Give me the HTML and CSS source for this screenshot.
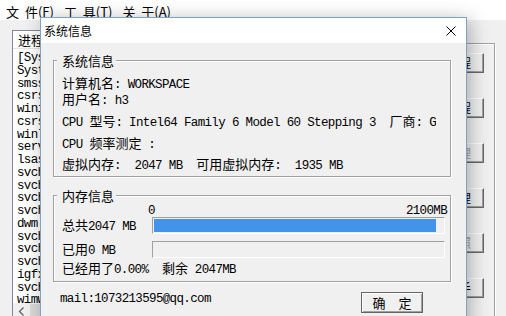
FILE: index.html
```html
<!DOCTYPE html>
<html lang="zh-CN">
<head>
<meta charset="utf-8">
<title>系统信息</title>
<link rel="stylesheet" href="styles.css">
</head>
<body>
<div class="app">
  <div class="menubar">
    <span class="menu">文 件(F)</span>
    <span class="menu">工 具(T)</span>
    <span class="menu">关 于(A)</span>
  </div>
  <div class="main">
    <div class="list">
      <div class="list-head">进程名称</div>
      <div class="list-body">
        <div>[System Process]</div>
        <div>System</div>
        <div>smss.exe</div>
        <div>csrss.exe</div>
        <div>wininit.exe</div>
        <div>csrss.exe</div>
        <div>winlogon.exe</div>
        <div>services.exe</div>
        <div>lsass.exe</div>
        <div>svchost.exe</div>
        <div>svchost.exe</div>
        <div>svchost.exe</div>
        <div>svchost.exe</div>
        <div>dwm.exe</div>
        <div>svchost.exe</div>
        <div>svchost.exe</div>
        <div>svchost.exe</div>
        <div>igfxCUIService.exe</div>
        <div>svchost.exe</div>
        <div>wimwsvc.exe</div>
      </div>
      <div class="hscroll">
        <span class="hs-arrow"><svg width="7" height="9" viewBox="0 0 7 9"><path d="M5.5 0.5 L1.5 4.5 L5.5 8.5" fill="none" stroke="#606060" stroke-width="1.3"/></svg></span>
        <span class="hs-thumb"></span>
      </div>
    </div>
    <div class="side">
      <div class="side-btn">刷新进程</div>
      <div class="side-btn">结束进程</div>
      <div class="side-btn off">模块管理</div>
      <div class="side-btn">服务管理</div>
      <div class="side-btn off">屏幕拍照</div>
      <div class="side-btn">系统助手</div>
    </div>
  </div>
</div>

<div class="dialog">
  <div class="titlebar">
    <span class="title">系统信息</span>
    <svg class="close" width="10" height="10" viewBox="0 0 10 10"><path d="M0.5 0.5 L9.5 9.5 M9.5 0.5 L0.5 9.5" stroke="#000" stroke-width="1"/></svg>
  </div>
  <div class="client">
    <div class="group">
      <span class="group-title">系统信息</span>
      <div class="info">
        <div class="line"><span class="z">计算机名</span>: WORKSPACE</div>
        <div class="line"><span class="z">用户名</span>: h3</div>
        <div class="line cpu gap6">CPU <span class="z">型号</span>: Intel64 Family 6 Model 60 Stepping 3  <span class="z">厂商</span>: GenuineIntel</div>
        <div class="line gap6">CPU <span class="z">频率测定</span> :</div>
        <div class="line gap5"><span class="z">虚拟内存</span>:  2047 MB  <span class="z">可用虚拟内存</span>:  1935 MB</div>
      </div>
    </div>
    <div class="group mem">
      <span class="group-title">内存信息</span>
      <div class="mem-body">
        <div class="scale"><span>0</span><span>2100MB</span></div>
        <div class="mrow">
          <span class="mlabel"><span class="z">总共</span>2047 MB</span>
          <div class="bar"><div class="fill" style="width: 97.48%"></div></div>
        </div>
        <div class="mrow">
          <span class="mlabel"><span class="z">已用</span>0 MB</span>
          <div class="bar"><div class="fill" style="width: 0%"></div></div>
        </div>
        <div class="summary"><span class="z">已经用了</span>0.00%  <span class="z">剩余</span> 2047MB</div>
      </div>
    </div>
    <div class="footer">
      <span class="mail">mail:1073213595@qq.com</span>
      <button class="ok" type="button">确　定</button>
    </div>
  </div>
</div>
</body>
</html>
```

FILE: styles.css
```css
* { box-sizing: border-box; }
html, body { margin: 0; padding: 0; }
body {
  width: 506px;
  height: 316px;
  overflow: hidden;
  position: relative;
  background: #f0f0f0;
  color: #000;
  font-family: "Noto Sans CJK SC", sans-serif;
}

/* background application window */
.app { display: flex; flex-direction: column; height: 316px; }
.menubar {
  height: 20px;
  flex: none;
  background: #fff;
  display: flex;
  align-items: flex-start;
  gap: 10px;
  padding: 2px 0 0 6px;
  font-size: 13px;
  line-height: 20px;
}
.menu { word-spacing: 3px; }

.main {
  flex: 1;
  min-height: 0;
  display: flex;
  align-items: flex-start;
  padding: 10px 0 0 12px;
}
.list {
  flex: none;
  width: 388px;
  height: 291px;
  border: 1px solid #828790;
  background: #fff;
  display: flex;
  flex-direction: column;
}
.list-head {
  flex: none;
  height: 18px;
  border-bottom: 1px solid #e5e5e5;
  padding-left: 5px;
  font-size: 13px;
  line-height: 17px;
}
.list-body {
  flex: 1;
  min-height: 0;
  overflow: hidden;
  padding: 3px 0 0 4px;
  font: 12.5px/12.75px "Liberation Mono", monospace;
  letter-spacing: -0.65px;
  white-space: nowrap;
}
.hscroll { flex: none; height: 17px; background: #f0f0f0; display: flex; }
.hs-arrow { width: 17px; display: flex; align-items: center; justify-content: center; }
.hs-thumb { width: 60px; margin: 1px 0; background: #dadada; }

.side {
  flex: none;
  margin: 13px 0 0 4px;
  width: 91px;
  height: 300px;
  border: 1px solid #a0a0a0;
  box-shadow: inset 1px 1px 0 #fff, 1px 1px 0 #fff;
  padding: 9px 0 0 5px;
  display: flex;
  flex-direction: column;
  gap: 25px;
}
.side-btn {
  width: 74px;
  height: 20px;
  border: 1px solid;
  border-color: #fff #696969 #696969 #fff;
  box-shadow: inset -1px -1px 0 #a0a0a0;
  background: #f0f0f0;
  font-size: 12px;
  line-height: 18px;
  text-align: center;
}
.side-btn.off { color: #a0a0a0; }

/* dialog window */
.dialog {
  position: absolute;
  left: 40px;
  top: 17px;
  width: 427px;
  height: 320px;
  border: 1px solid #7fa2c2;
  background: #f0f0f0;
  box-shadow: 3px 3px 18px rgba(0, 0, 0, 0.3);
  display: flex;
  flex-direction: column;
}
.titlebar {
  flex: none;
  height: 25px;
  background: #fff;
  display: flex;
  align-items: center;
  padding: 0 10px 0 3px;
  font-size: 12px;
}
.title { flex: 1; }
.close { display: block; }

.client { padding: 17px 15px 0 12px; }
.group {
  position: relative;
  border: 1px solid #a0a0a0;
  box-shadow: inset 1px 1px 0 #fff, 1px 1px 0 #fff;
}
.group-title {
  position: absolute;
  top: -9px;
  left: 3px;
  padding: 0 2px 0 5px;
  background: #f0f0f0;
  font-size: 13px;
  line-height: 17px;
}
.z {
  font-family: "Noto Sans CJK SC", sans-serif;
  font-size: 13px;
  letter-spacing: 0;
}

.info, .mem-body, .mail {
  font: 12.5px/16px "Liberation Mono", "Noto Sans CJK SC", monospace;
  letter-spacing: -0.65px;
}
.info { padding: 14px 4px 4px 8px; }
.line { height: 16px; white-space: pre; overflow: hidden; }
.cpu { width: 374px; }
.gap6 { margin-top: 6px; }
.gap5 { margin-top: 5px; }

.mem { margin-top: 18px; }
.mem-body { padding: 9px 4px 5px 8px; }
.scale {
  display: flex;
  justify-content: space-between;
  height: 12px;
  line-height: 12px;
  margin: 0 -1px 0 86px;
}
.mrow { display: flex; align-items: center; height: 17px; }
.mrow + .mrow { margin-top: 7px; }
.mlabel { flex: none; width: 90px; white-space: pre; }
.bar {
  width: 293px;
  height: 17px;
  border: 1px solid;
  border-color: #a0a0a0 #fff #fff #a0a0a0;
  padding: 1px;
}
.fill { height: 100%; background: #4293ea; }
.summary { margin-top: 2px; height: 16px; white-space: pre; }

.footer {
  display: flex;
  align-items: flex-start;
  margin-top: 10px;
  padding: 0 28px 0 7px;
}
.mail { margin-top: -1px; }
.ok {
  margin: 0 0 0 auto;
  width: 62px;
  height: 21px;
  padding: 0;
  border: 1px solid #646464;
  box-shadow: inset 1px 1px 0 #fff, inset -1px -1px 0 #a0a0a0;
  background: #f0f0f0;
  font-family: "Noto Sans CJK SC", sans-serif;
  font-size: 13px;
  line-height: 18px;
  color: #000;
}
```
